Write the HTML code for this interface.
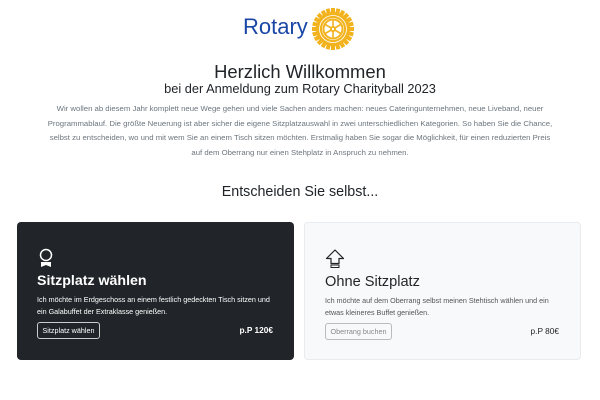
<!DOCTYPE html>
<html><head><meta charset="utf-8"><style>
*{margin:0;padding:0;box-sizing:border-box}
body{width:600px;height:400px;background:#fff;font-family:"Liberation Sans",sans-serif;color:#212529;position:relative;overflow:hidden}
.abs{position:absolute}
.c{left:0;width:600px;text-align:center}
.card{position:absolute;top:222px;height:138px;width:277px;border-radius:4px}
.d{left:17px;background:#212529;color:#fff}
.l{left:304px;background:#f8f9fa;border:1px solid #e9ecef;color:#212529}
.t{position:absolute;left:20px;top:51px;font-size:14.2px}
.p{position:absolute;left:20px;top:72px;font-size:7.2px;line-height:12px}
.b{position:absolute;left:20px;top:100px;height:17px;padding:0 4.5px;font-size:7.2px;line-height:15px;border-radius:3px}
.pr{position:absolute;right:21px;top:103px;font-size:8.3px;font-weight:bold}
</style></head><body>
<div class="abs" style="left:243px;top:14px;font-size:22px;color:#1a47a6">Rotary</div>
<svg class="abs" style="left:312px;top:8px" width="42" height="42" viewBox="-21 -21 42 42">
<g fill="#f2b31f">
<circle r="17"/>
<g id="t"><rect x="-2" y="-21" width="4" height="5"/></g>
<use href="#t" transform="rotate(15)"/><use href="#t" transform="rotate(30)"/><use href="#t" transform="rotate(45)"/><use href="#t" transform="rotate(60)"/><use href="#t" transform="rotate(75)"/><use href="#t" transform="rotate(90)"/><use href="#t" transform="rotate(105)"/><use href="#t" transform="rotate(120)"/><use href="#t" transform="rotate(135)"/><use href="#t" transform="rotate(150)"/><use href="#t" transform="rotate(165)"/><use href="#t" transform="rotate(180)"/><use href="#t" transform="rotate(195)"/><use href="#t" transform="rotate(210)"/><use href="#t" transform="rotate(225)"/><use href="#t" transform="rotate(240)"/><use href="#t" transform="rotate(255)"/><use href="#t" transform="rotate(270)"/><use href="#t" transform="rotate(285)"/><use href="#t" transform="rotate(300)"/><use href="#t" transform="rotate(315)"/><use href="#t" transform="rotate(330)"/><use href="#t" transform="rotate(345)"/>
</g>
<circle r="13.5" fill="none" stroke="#fff" stroke-width="0.8"/>
<circle r="11" fill="#fff"/>
<circle r="9.5" fill="none" stroke="#f2b31f" stroke-width="2"/>
<g stroke="#f2b31f" stroke-width="1.6"><line x1="0" y1="-10" x2="0" y2="10"/><line x1="-8.7" y1="-5" x2="8.7" y2="5"/><line x1="-8.7" y1="5" x2="8.7" y2="-5"/></g>
<circle r="3" fill="#f2b31f"/><circle r="1.2" fill="#fff"/>
</svg>
<div class="abs c" style="top:61px;font-size:18.4px">Herzlich Willkommen</div>
<div class="abs c" style="top:81px;font-size:12.8px">bei der Anmeldung zum Rotary Charityball 2023</div>
<div class="abs c" style="top:102px;font-size:7.75px;line-height:14.5px;color:#6c757d">Wir wollen ab diesem Jahr komplett neue Wege gehen und viele Sachen anders machen: neues Cateringunternehmen, neue Liveband, neuer<br>Programmablauf. Die größte Neuerung ist aber sicher die eigene Sitzplatzauswahl in zwei unterschiedlichen Kategorien. So haben Sie die Chance,<br>selbst zu entscheiden, wo und mit wem Sie an einem Tisch sitzen möchten. Erstmalig haben Sie sogar die Möglichkeit, für einen reduzierten Preis<br>auf dem Oberrang nur einen Stehplatz in Anspruch zu nehmen.</div>
<div class="abs c" style="top:184px;font-size:14.3px">Entscheiden Sie selbst...</div>
<div class="card d">
<svg class="abs" style="left:21px;top:26px" width="16" height="20" viewBox="0 0 16 20"><circle cx="8" cy="7" r="5.5" fill="none" stroke="#fff" stroke-width="1.5"/><path d="M3 14h10v5l-5-2-5 2z" fill="#fff"/></svg>
<div class="t" style="font-weight:bold">Sitzplatz wählen</div>
<div class="p">Ich möchte im Erdgeschoss an einem festlich gedeckten Tisch sitzen und<br>ein Galabuffet der Extraklasse genießen.</div>
<div class="b" style="border:1px solid #ccc;color:#fff">Sitzplatz wählen</div>
<div class="pr">p.P 120€</div>
</div>
<div class="card l">
<svg class="abs" style="left:20px;top:26px" width="20" height="20" viewBox="0 0 20 20"><path d="M10 1L1.5 9.5H6v5h8v-5h4.5z" fill="none" stroke="#212529" stroke-width="1.2" stroke-linejoin="round"/><rect x="6" y="16" width="8" height="2.5" fill="none" stroke="#212529" stroke-width="1"/></svg>
<div class="t" style="font-size:14.6px">Ohne Sitzplatz</div>
<div class="p" style="color:#555">Ich möchte auf dem Oberrang selbst meinen Stehtisch wählen und ein<br>etwas kleineres Buffet genießen.</div>
<div class="b" style="border:1px solid #bbb;color:#888">Oberrang buchen</div>
<div class="pr" style="font-weight:normal">p.P 80€</div>
</div>
</body></html>
